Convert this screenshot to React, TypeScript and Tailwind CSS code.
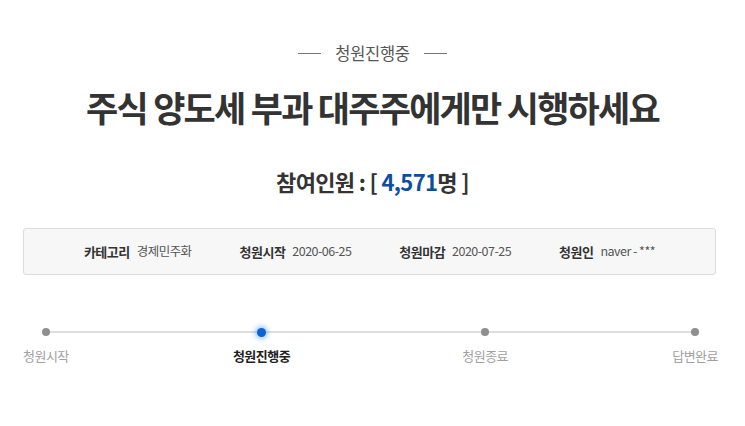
import React from 'react';

const steps = [
    { label: '청원시작', active: false },
    { label: '청원진행중', active: true },
    { label: '청원종료', active: false },
    { label: '답변완료', active: false },
];

const info = [
    { label: '카테고리', value: '경제민주화' },
    { label: '청원시작', value: '2020-06-25' },
    { label: '청원마감', value: '2020-07-25' },
    { label: '청원인', value: 'naver - ***' },
];

export default function App() {
    return (
        <div
            className="w-[745px] h-[426px] bg-white overflow-hidden"
            style={{ fontFamily: '"Noto Sans CJK KR", "Noto Sans", sans-serif' }}
        >
            <div className="pt-[40px] flex items-center justify-center gap-[14px]">
                <span className="w-[23px] h-px bg-[#777]" />
                <span className="text-[16.5px] leading-[26px] text-[#555] tracking-[-0.02em]">청원진행중</span>
                <span className="w-[23px] h-px bg-[#777]" />
            </div>

            <h1 className="mt-[19px] text-center text-[35px] leading-[44px] font-bold text-[#333] tracking-[-0.05em]">
                주식 양도세 부과 대주주에게만 시행하세요
            </h1>

            <div className="mt-[37px] text-center text-[22px] leading-[30px] font-bold text-[#333] tracking-[-0.03em]">
                참여인원 : [ <span className="text-[#0d4ea3]">4,571</span>명 ]
            </div>

            <div className="mt-[32px] mx-[23px] w-[693px] h-[47px] bg-[#f7f7f7] border border-[#dcdcdc] rounded-[3px] flex items-center justify-center gap-[48px]">
                {info.map(item => (
                    <div key={item.label} className="flex items-center gap-[7px] text-[13px] text-[#333] tracking-[-0.04em]">
                        <span className="font-bold">{item.label}</span>
                        <span className="text-[12.5px] text-[#555]">{item.value}</span>
                    </div>
                ))}
            </div>

            <div className="relative mt-[52px] mx-[23px] w-[695px]">
                <div className="absolute left-[23px] right-[24px] top-[4px] h-[2px] bg-[#dedede]" />
                <div className="relative flex justify-between">
                    {steps.map((step, i) => (
                        <div key={step.label} className={`flex flex-col items-center ${i === 1 ? 'mr-[8px]' : ''}`}>
                            <div className="h-[10px] flex items-center justify-center">
                                {step.active ? (
                                    <span className="w-[9px] h-[9px] rounded-full bg-[#0b63d8] shadow-[0_0_5px_2px_rgba(40,130,255,0.45)]" />
                                ) : (
                                    <span className="w-[8px] h-[8px] rounded-full bg-[#8f8f8f]" />
                                )}
                            </div>
                            <span
                                className={`mt-[9px] text-[13px] leading-[20px] tracking-[-0.04em] ${
                                    step.active ? 'font-bold text-[#222]' : 'text-[#a0a0a0]'
                                }`}
                            >
                                {step.label}
                            </span>
                        </div>
                    ))}
                </div>
            </div>
        </div>
    );
}
